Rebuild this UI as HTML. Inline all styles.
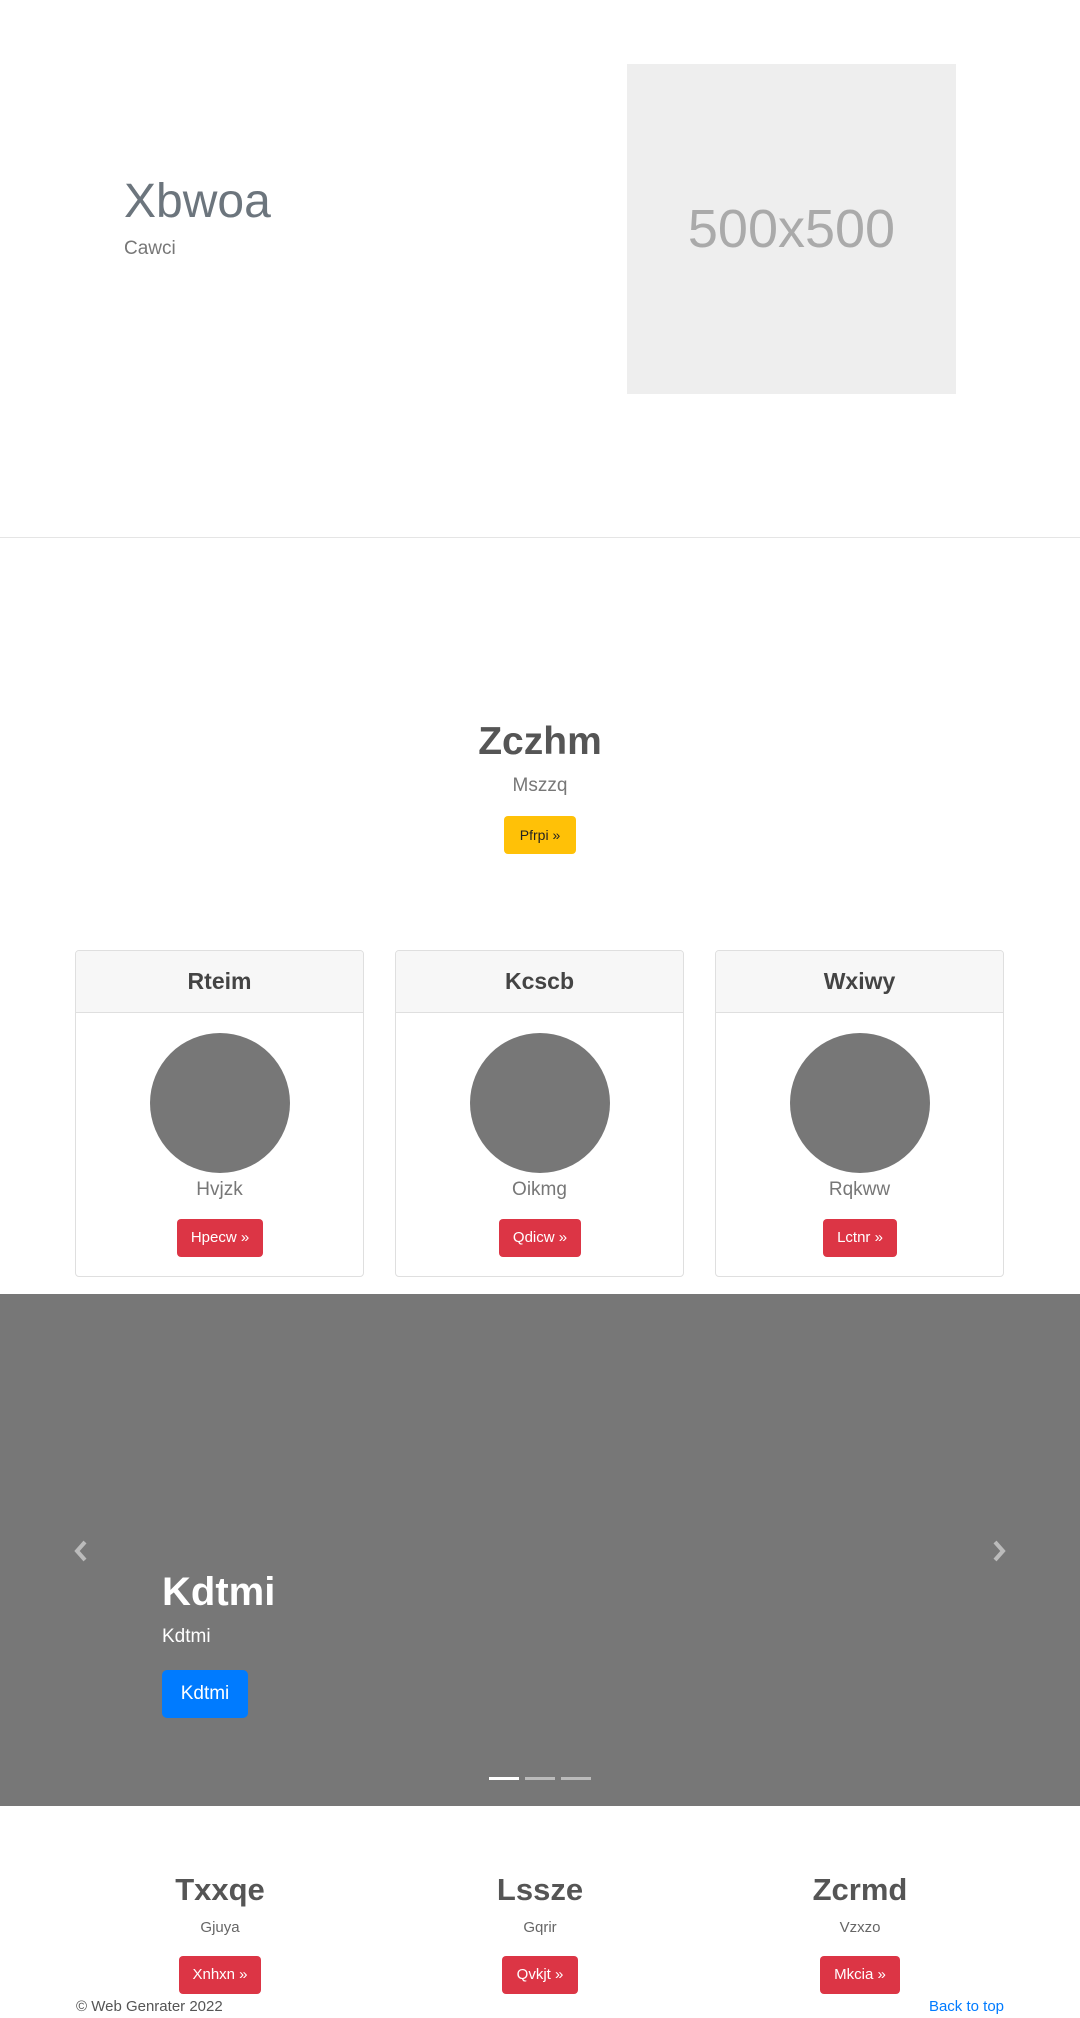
<!DOCTYPE html>
<html><head><meta charset="utf-8"><style>
*{margin:0;padding:0;box-sizing:border-box}
body{width:1080px;height:2018px;position:relative;background:#fff;font-family:"Liberation Sans",sans-serif;overflow:hidden}
.a{position:absolute;white-space:nowrap}
.c{text-align:center}
.btn{position:absolute;border-radius:4px;color:#fff;text-align:center;font-size:15px}
.card{position:absolute;top:950px;width:289px;height:327px;border:1px solid #dfdfdf;border-radius:4px;overflow:hidden}
.card .h{height:62px;background:#f7f7f7;border-bottom:1px solid #dfdfdf;text-align:center;font-size:23px;color:#444;line-height:60px;font-weight:600}
.card .circ{position:absolute;left:74px;top:82px;width:140px;height:140px;border-radius:50%;background:#777}
.card .n{position:absolute;left:0;width:100%;top:228px;text-align:center;font-size:19px;color:#777;font-weight:300}
.card .btn{top:268px;height:38px;line-height:38px;background:#dc3545}
</style></head><body>
<div class="a" style="left:124px;top:172px;font-size:48px;color:#6c757d;line-height:60px">Xbwoa</div>
<div class="a" style="left:124px;top:236px;font-size:19px;color:#777;line-height:26px">Cawci</div>
<div class="a" style="left:627px;top:64px;width:329px;height:330px;background:#eee;color:#aaa;font-size:54px;text-align:center;line-height:330px">500x500</div>
<div class="a" style="left:0;top:537px;width:1080px;height:1px;background:#e5e5e5"></div>

<div class="a c" style="left:0;width:1080px;top:716px;font-size:39px;font-weight:bold;color:#555;line-height:52px">Zczhm</div>
<div class="a c" style="left:0;width:1080px;top:773px;font-size:19px;color:#777;line-height:26px">Mszzq</div>
<div class="btn" style="left:504px;top:816px;width:72px;height:38px;line-height:38px;background:#ffc107;color:#222;font-size:14px">Pfrpi »</div>

<div class="card" style="left:75px"><div class="h">Rteim</div><div class="circ"></div><div class="n">Hvjzk</div><div class="btn" style="left:101px;width:86px">Hpecw »</div></div>
<div class="card" style="left:395px"><div class="h">Kcscb</div><div class="circ"></div><div class="n">Oikmg</div><div class="btn" style="left:103px;width:82px">Qdicw »</div></div>
<div class="card" style="left:715px"><div class="h">Wxiwy</div><div class="circ"></div><div class="n">Rqkww</div><div class="btn" style="left:107px;width:74px">Lctnr »</div></div>

<div class="a" style="left:0;top:1294px;width:1080px;height:512px;background:#777"></div>
<svg class="a" style="left:72px;top:1539px" width="20" height="24" viewBox="0 0 20 24"><path d="M13 3 L5 12 L13 21" stroke="#bbb" stroke-width="4" fill="none"/></svg>
<svg class="a" style="left:988px;top:1539px" width="20" height="24" viewBox="0 0 20 24"><path d="M7 3 L15 12 L7 21" stroke="#bbb" stroke-width="4" fill="none"/></svg>
<div class="a" style="left:162px;top:1568px;font-size:40px;font-weight:bold;color:#fff;line-height:48px">Kdtmi</div>
<div class="a" style="left:162px;top:1624px;font-size:19px;color:#fff;line-height:26px">Kdtmi</div>
<div class="btn" style="left:162px;top:1670px;width:86px;height:48px;line-height:48px;background:#007bff;font-size:19px;border-radius:5px">Kdtmi</div>
<div class="a" style="left:489px;top:1777px;width:30px;height:3px;background:#fff"></div>
<div class="a" style="left:525px;top:1777px;width:30px;height:3px;background:#bbb"></div>
<div class="a" style="left:561px;top:1777px;width:30px;height:3px;background:#bbb"></div>

<div class="a c" style="left:120px;width:200px;top:1870px;font-size:31px;font-weight:bold;color:#555;line-height:40px">Txxqe</div>
<div class="a c" style="left:440px;width:200px;top:1870px;font-size:31px;font-weight:bold;color:#555;line-height:40px">Lssze</div>
<div class="a c" style="left:760px;width:200px;top:1870px;font-size:31px;font-weight:bold;color:#555;line-height:40px">Zcrmd</div>
<div class="a c" style="left:120px;width:200px;top:1918px;font-size:15px;color:#666;line-height:20px">Gjuya</div>
<div class="a c" style="left:440px;width:200px;top:1918px;font-size:15px;color:#666;line-height:20px">Gqrir</div>
<div class="a c" style="left:760px;width:200px;top:1918px;font-size:15px;color:#666;line-height:20px">Vzxzo</div>
<div class="btn" style="left:179px;top:1956px;width:82px;height:38px;line-height:38px;background:#dc3545">Xnhxn »</div>
<div class="btn" style="left:502px;top:1956px;width:76px;height:38px;line-height:38px;background:#dc3545">Qvkjt »</div>
<div class="btn" style="left:820px;top:1956px;width:80px;height:38px;line-height:38px;background:#dc3545">Mkcia »</div>
<div class="a" style="left:76px;top:1997px;font-size:15px;color:#555;line-height:20px">© Web Genrater 2022</div>
<div class="a" style="right:76px;top:1997px;font-size:15px;color:#007bff;line-height:20px">Back to top</div>
</body></html>
